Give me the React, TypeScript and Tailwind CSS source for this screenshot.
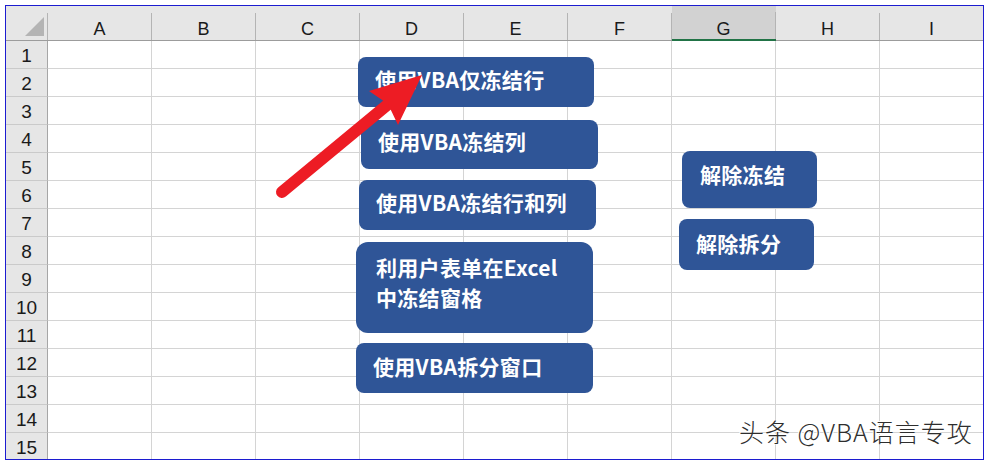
import React from "react";

const cols = ["A", "B", "C", "D", "E", "F", "G", "H", "I"];
const rows = Array.from({ length: 15 }, (_, i) => i + 1);

function HeaderCell({ label, last, selected }: { label: string; last?: boolean; selected?: boolean }) {
  return (
    <div
      className={
        "flex h-[35px] " +
        (selected ? "bg-[#d2d2d2] border-b-2 border-[#217346]" : "bg-[#e6e6e6] border-b border-[#9c9c9c]")
      }
    >
      <div className="flex-1 flex justify-center pt-[13px] text-[18px] leading-[20px] text-[#1a1a1a]">{label}</div>
      {!last && <div className="w-px h-[27px] self-end bg-[#b4b4b4]" />}
    </div>
  );
}

function Btn({
  className,
  children,
}: {
  className: string;
  children: React.ReactNode;
}) {
  return (
    <div
      className={
        "absolute bg-[#2f5597] text-white font-bold text-[21px] leading-[30px] whitespace-nowrap " + className
      }
      style={{ fontFamily: '"Noto Sans CJK SC", "Noto Sans", sans-serif' }}
    >
      {children}
    </div>
  );
}

export default function App() {
  return (
    <div
      className="relative w-[992px] h-[462px] bg-white overflow-hidden"
      style={{ fontFamily: '"Liberation Sans", Arial, sans-serif' }}
    >
      <div className="ml-[5px] mt-[5px] w-[979px] h-[455px] border border-[#1c1cd0] overflow-hidden">
        <div className="grid grid-cols-[42px_repeat(8,104px)_103px]">
          {/* corner */}
          <div className="flex h-[35px] bg-[#e6e6e6] border-b border-[#9c9c9c]">
            <div className="flex-1 flex items-end justify-end pb-[4px] pr-[3px]">
              <svg width="19" height="19" viewBox="0 0 19 19">
                <polygon points="19,0 19,19 0,19" fill="#b4b4b4" />
              </svg>
            </div>
            <div className="w-px h-[27px] self-end bg-[#b4b4b4]" />
          </div>
          {cols.map((c, i) => (
            <HeaderCell key={c} label={c} last={i === cols.length - 1} selected={c === "G"} />
          ))}
          {rows.map((r) => (
            <React.Fragment key={r}>
              <div className="h-[28px] bg-[#e6e6e6] border-b border-r border-b-[#cacaca] border-r-[#a6a6a6] flex items-end justify-center pb-[3px] text-[19px] leading-none text-[#1a1a1a]">
                {r}
              </div>
              {cols.map((c, i) => (
                <div
                  key={c}
                  className={
                    "h-[28px] border-b border-[#d4d4d4] " + (i === cols.length - 1 ? "" : "border-r")
                  }
                />
              ))}
            </React.Fragment>
          ))}
        </div>
      </div>

      <Btn className="left-[358px] top-[57px] w-[236px] h-[50px] rounded-[8px] pl-[17px] pt-[7px] tracking-[0.3px]">使用VBA仅冻结行</Btn>
      <Btn className="left-[361px] top-[120px] w-[237px] h-[49px] rounded-[8px] pl-[17px] pt-[6px] tracking-[0.3px]">使用VBA冻结列</Btn>
      <Btn className="left-[359px] top-[180px] w-[237px] h-[50px] rounded-[8px] pl-[17px] pt-[7px] tracking-[0.3px]">使用VBA冻结行和列</Btn>
      <Btn className="left-[356px] top-[242px] w-[237px] h-[91px] rounded-[12px] pl-[20px] pt-[10px] tracking-[0.3px]">
        <div>利用户表单在Excel</div>
        <div>中冻结窗格</div>
      </Btn>
      <Btn className="left-[356px] top-[343px] w-[237px] h-[50px] rounded-[8px] pl-[17px] pt-[8px] tracking-[0.3px]">使用VBA拆分窗口</Btn>
      <Btn className="left-[682px] top-[151px] w-[135px] h-[57px] rounded-[8px] pl-[18px] pt-[8px] tracking-[0.3px]">解除冻结</Btn>
      <Btn className="left-[679px] top-[219px] w-[135px] h-[51px] rounded-[8px] pl-[17px] pt-[9px] tracking-[0.3px]">解除拆分</Btn>

      <svg className="absolute left-0 top-0 pointer-events-none" width="992" height="462" viewBox="0 0 992 462">
        <line x1="282" y1="192" x2="392" y2="101" stroke="#ed1c24" strokeWidth="12" strokeLinecap="round" />
        <polygon points="422,75 369,91 388,104 398,125" fill="#ed1c24" />
      </svg>

      <div
        className="absolute left-[739px] top-[416px] text-[25px] leading-[30px] tracking-[1px] font-light text-[#2e2e2e] whitespace-nowrap [text-shadow:1px_1px_0_#ffffff,-1px_-1px_0_#ffffff]"
        style={{ fontFamily: '"Noto Sans CJK SC", "Noto Sans", sans-serif' }}
      >
        头条 @VBA语言专攻
      </div>
    </div>
  );
}
